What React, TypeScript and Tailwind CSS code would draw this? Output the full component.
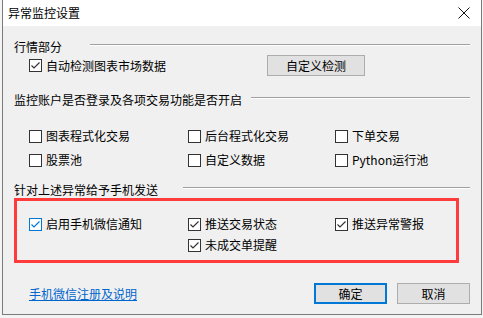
import React from "react";

const FONT = { fontFamily: '"Microsoft YaHei", "Noto Sans CJK SC", "Noto Sans", sans-serif' };

interface BoxProps {
	label: string;
	checked?: boolean;
	focused?: boolean;
}

const CheckBox = ({ label, checked = false, focused = false }: BoxProps) => {
	const color = focused ? "#0078d7" : "#333333";
	return (
		<div className="flex items-center h-4 gap-[4px]">
			<span
				className={`w-[13px] h-[13px] bg-white border flex items-center justify-center shrink-0 ${
					focused ? "border-[#0078d7]" : "border-[#333333]"
				}`}
			>
				{checked && (
					<svg width="11" height="11" viewBox="0 0 11 11">
						<polyline
							points="1.5,5.5 4,8 9.5,2.5"
							fill="none"
							stroke={color}
							strokeWidth="1.2"
						/>
					</svg>
				)}
			</span>
			<span className="text-[12px] leading-4 text-black whitespace-nowrap">{label}</span>
		</div>
	);
};

const GroupHeader = ({ title, width }: { title: string; width: string }) => (
	<div className="flex items-center h-4">
		<span className={`${width} text-[12px] leading-4 text-black whitespace-nowrap shrink-0`}>{title}</span>
		<div className="flex-1 mb-[4px]">
			<div className="border-t border-[#a0a0a0]" />
			<div className="border-t border-white" />
		</div>
	</div>
);

export default function App() {
	return (
		<div className="w-[483px] h-[318px] bg-[#f4f4f4] overflow-hidden" style={FONT}>
			<div className="ml-[2px] w-[480px] h-[315px] flex flex-col border-l border-r border-b border-[#7a7a7a]">
				{/* TITLE BAR */}
				<div className="h-[26px] bg-white flex items-center justify-between pl-[5px] pr-[11px] shrink-0">
					<span className="text-[12px] leading-4 text-black">异常监控设置</span>
					<svg width="12" height="12" viewBox="0 0 12 12">
						<line x1="0.5" y1="0.5" x2="11.5" y2="11.5" stroke="#111" strokeWidth="1" />
						<line x1="11.5" y1="0.5" x2="0.5" y2="11.5" stroke="#111" strokeWidth="1" />
					</svg>
				</div>

				{/* BODY */}
				<div className="flex-1 bg-[#f0f0f0] pl-[11px] pr-[11px] pt-[13px] flex flex-col">
					<GroupHeader title="行情部分" width="w-[76px]" />
					<div className="h-[21px] flex items-center">
						<div className="w-[253px] pl-[15px]">
							<CheckBox label="自动检测图表市场数据" checked />
						</div>
						<button className="w-[98px] h-[21px] bg-[#e1e1e1] border border-[#adadad] text-[12px] leading-4 text-black">
							自定义检测
						</button>
					</div>

					<div className="mt-[16px]">
						<GroupHeader title="监控账户是否登录及各项交易功能是否开启" width="w-[237px]" />
					</div>
					<div className="mt-[20px] pl-[15px] grid grid-cols-[159px_147px_1fr] gap-y-[8px]">
						<CheckBox label="图表程式化交易" />
						<CheckBox label="后台程式化交易" />
						<CheckBox label="下单交易" />
						<CheckBox label="股票池" />
						<CheckBox label="自定义数据" />
						<CheckBox label="Python运行池" />
					</div>

					<div className="mt-[14px]">
						<GroupHeader title="针对上述异常给予手机发送" width="w-[169px]" />
					</div>
					<div className="w-[445px] h-[65px] border-[3px] border-[#ff3b3b] pl-[12px] pt-[15px]">
						<div className="grid grid-cols-[159px_147px_1fr] gap-y-[5px]">
							<CheckBox label="启用手机微信通知" checked focused />
							<CheckBox label="推送交易状态" checked />
							<CheckBox label="推送异常警报" checked />
							<div />
							<CheckBox label="未成交单提醒" checked />
						</div>
					</div>

					<div className="mt-[20px] h-[21px] flex items-center justify-between">
						<a className="ml-[15px] text-[12px] leading-4 text-[#0066cc] underline">手机微信注册及说明</a>
						<div className="flex gap-[10px]">
							<button className="w-[73px] h-[21px] bg-[#e1e1e1] border-2 border-[#0078d7] text-[12px] leading-4 text-black">
								确定
							</button>
							<button className="w-[73px] h-[21px] bg-[#e1e1e1] border border-[#adadad] text-[12px] leading-4 text-black">
								取消
							</button>
						</div>
					</div>
				</div>
			</div>
		</div>
	);
}
